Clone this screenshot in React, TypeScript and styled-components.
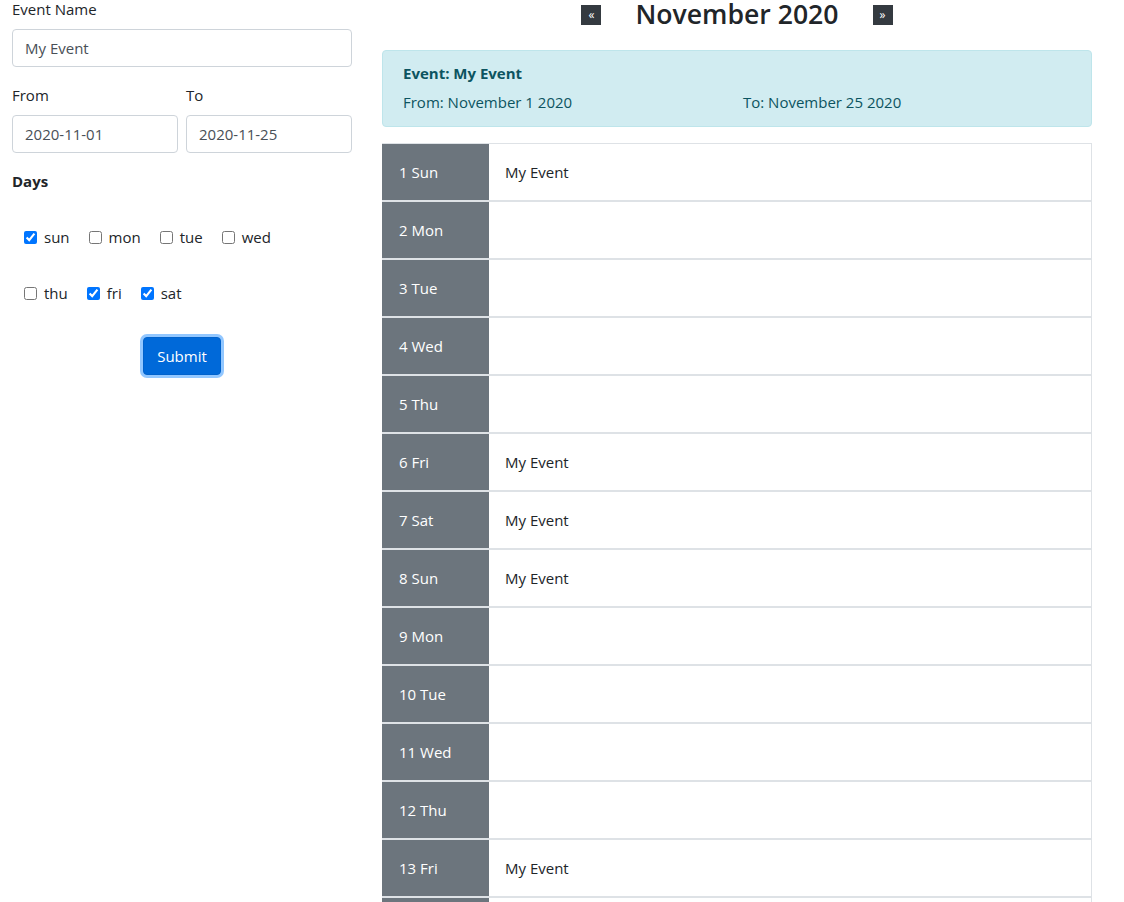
import React from 'react'
import styled, { createGlobalStyle } from 'styled-components'

const GlobalStyle = createGlobalStyle`
    body {
        margin: 0;
        font-family: "Open Sans", "Noto Sans", sans-serif;
        font-size: 15px;
        line-height: 24px;
        color: #212529;
        background: #fff;
    }
`

const DAY_NAMES = ['Sun', 'Mon', 'Tue', 'Wed', 'Thu', 'Fri', 'Sat']
const CHECK_ROWS = [
    ['sun', 'mon', 'tue', 'wed'],
    ['thu', 'fri', 'sat']
]
const selected = ['sun', 'fri', 'sat']

// November 2020 starts on a Sunday
const days = Array.from({ length: 30 }, (_, i) => {
    const dow = i % 7
    const date = i + 1
    const hasEvent = date <= 25 && selected.includes(DAY_NAMES[dow].toLowerCase())
    return { date, name: DAY_NAMES[dow], hasEvent }
})

const App = () => (
    <>
        <GlobalStyle />
        <Page>
            <FormColumn>
                <FormGroup>
                    <Label>Event Name</Label>
                    <Input defaultValue="My Event" />
                </FormGroup>
                <DateRow>
                    <FormGroup>
                        <Label>From</Label>
                        <Input defaultValue="2020-11-01" />
                    </FormGroup>
                    <FormGroup>
                        <Label>To</Label>
                        <Input defaultValue="2020-11-25" />
                    </FormGroup>
                </DateRow>
                <DaysTitle>Days</DaysTitle>
                {CHECK_ROWS.map((row, r) => (
                    <CheckRow key={r}>
                        {row.map(d => (
                            <CheckItem key={d}>
                                <Checkbox type="checkbox" defaultChecked={selected.includes(d)} />
                                {d}
                            </CheckItem>
                        ))}
                    </CheckRow>
                ))}
                <SubmitWrap>
                    <SubmitButton>Submit</SubmitButton>
                </SubmitWrap>
            </FormColumn>

            <CalendarColumn>
                <Header>
                    <NavButton>«</NavButton>
                    <Title>November 2020</Title>
                    <NavButton>»</NavButton>
                </Header>
                <Alert>
                    <AlertTitle>Event: My Event</AlertTitle>
                    <AlertDates>
                        <span>From: November 1 2020</span>
                        <span>To: November 25 2020</span>
                    </AlertDates>
                </Alert>
                <DayTable>
                    {days.map(d => (
                        <DayRow key={d.date}>
                            <DayCell>
                                {d.date} {d.name}
                            </DayCell>
                            <EventCell>{d.hasEvent ? 'My Event' : ''}</EventCell>
                        </DayRow>
                    ))}
                </DayTable>
            </CalendarColumn>
        </Page>
    </>
)

export default App

const Page = styled.div`
    display: flex;
    gap: 30px;
    padding: 0 12px;
    margin-top: -3px;
`

const FormColumn = styled.div`
    width: 340px;
    flex-shrink: 0;
`

const FormGroup = styled.div`
    margin-bottom: 16px;
    min-width: 0;
`

const Label = styled.label`
    display: block;
    margin-bottom: 8px;
`

const Input = styled.input`
    display: block;
    box-sizing: border-box;
    width: 100%;
    height: 38px;
    padding: 6px 12px;
    font: inherit;
    color: #495057;
    border: 1px solid #ced4da;
    border-radius: 4px;
    background: #fff;
`

const DateRow = styled.div`
    display: grid;
    grid-template-columns: 1fr 1fr;
    gap: 8px;
`

const DaysTitle = styled.div`
    font-weight: 700;
    margin-bottom: 16px;
`

const CheckRow = styled.div`
    display: flex;
    align-items: center;
    height: 56px;
    padding-left: 12px;
`

const CheckItem = styled.label`
    display: flex;
    align-items: center;
    gap: 7px;
    margin-right: 19px;
`

const Checkbox = styled.input`
    width: 13px;
    height: 13px;
    margin: 0;
`

const SubmitWrap = styled.div`
    display: flex;
    justify-content: center;
    margin-top: 16px;
`

const SubmitButton = styled.button`
    font: inherit;
    color: #fff;
    background: #0069d9;
    border: 1px solid #0062cc;
    border-radius: 4px;
    padding: 6px 13px;
    box-shadow: 0 0 0 3px rgba(38, 143, 255, 0.5);
`

const CalendarColumn = styled.div`
    width: 710px;
    flex-shrink: 0;
`

const Header = styled.div`
    display: flex;
    align-items: center;
    justify-content: center;
    gap: 34px;
    height: 36px;
    margin-bottom: 17px;
`

const NavButton = styled.span`
    display: flex;
    align-items: center;
    justify-content: center;
    width: 20px;
    height: 20px;
    background: #343a40;
    color: #fff;
    font-size: 12px;
    line-height: 1;
`

const Title = styled.h3`
    margin: 0;
    font-size: 26.6px;
    font-weight: 600;
    line-height: 1.2;
`

const Alert = styled.div`
    background: #d1ecf1;
    border: 1px solid #bee5eb;
    border-radius: 4px;
    color: #0c5460;
    padding: 10px 20px 12px;
    margin-bottom: 16px;
`

const AlertTitle = styled.div`
    font-weight: 700;
    margin-bottom: 5px;
`

const AlertDates = styled.div`
    display: grid;
    grid-template-columns: 340px 1fr;
`

const DayTable = styled.div`
    border: 1px solid #dee2e6;
    border-left: none;
`

const DayRow = styled.div`
    display: flex;
    height: 56px;
    border-bottom: 2px solid #dee2e6;
`

const DayCell = styled.div`
    display: flex;
    align-items: center;
    width: 107px;
    padding-left: 17px;
    box-sizing: border-box;
    background: #6c757d;
    color: #fff;
`

const EventCell = styled.div`
    display: flex;
    align-items: center;
    padding-left: 16px;
`
